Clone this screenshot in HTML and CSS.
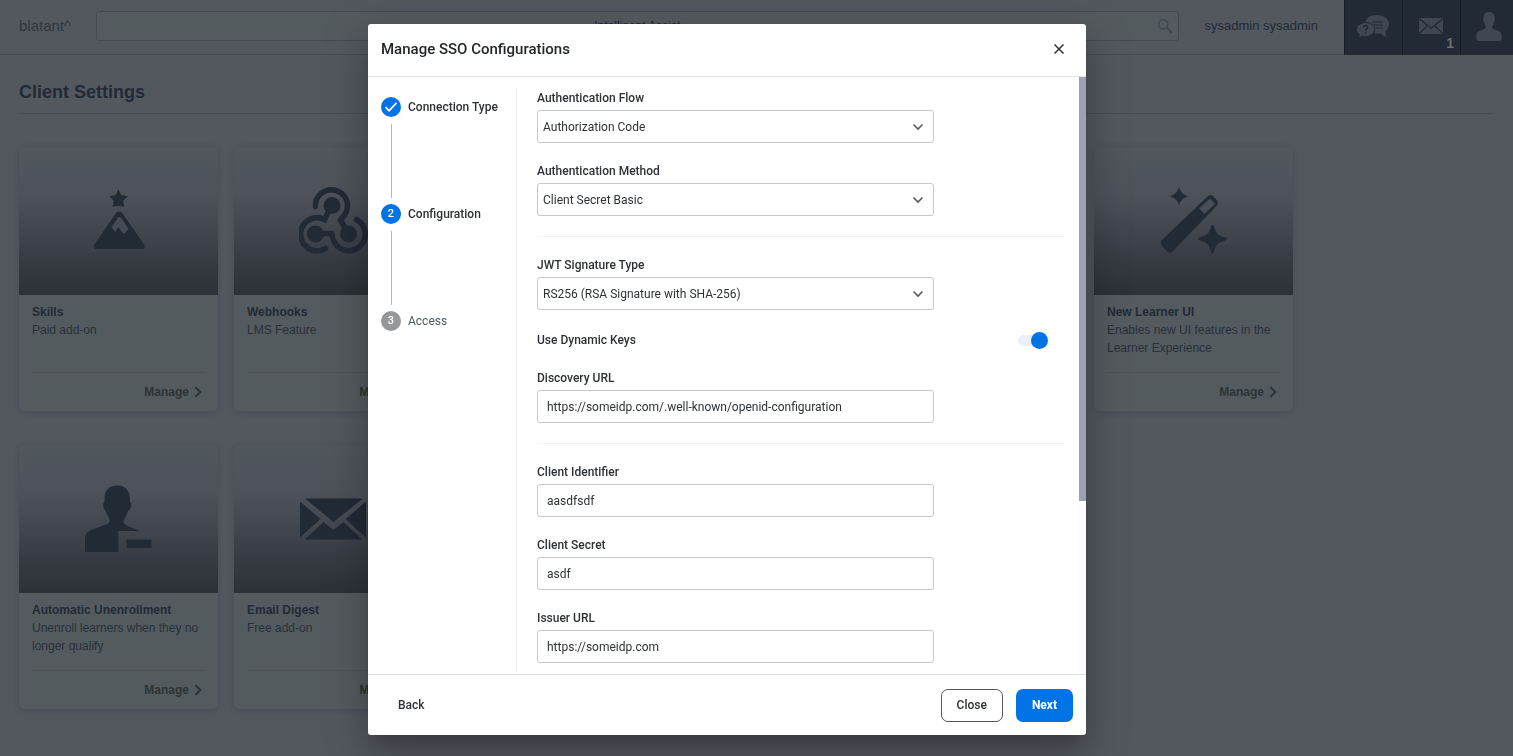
FILE: index.html
```html
<!DOCTYPE html>
<html lang="en">
<head>
<meta charset="utf-8">
<title>Client Settings</title>
<link rel="stylesheet" href="styles.css">
</head>
<body>
<header class="topbar">
  <a class="brand" href="#">blatant^</a>
  <div class="search">
    <input class="search-input" type="text" placeholder="Intelligent Assist" aria-label="Search">
    <svg class="search-icon" viewBox="0 0 16 16" width="16" height="16" fill="none" stroke="currentColor" stroke-width="1.4"><circle cx="6.2" cy="6.2" r="4.6"/><path d="M9.6 9.6 15 15" stroke-width="1.8"/></svg>
  </div>
  <span class="user">sysadmin sysadmin</span>
  <nav class="tiles">
    <button class="tile" type="button" aria-label="Help">
      <svg viewBox="0 0 34 24" width="34" height="24"><path fill="currentColor" d="M20.500 1C28 1 33 4.800 33 10.200c0 3-1.500 5.400-3.700 7 .2 2 .7 3.800 1.300 5.800-2.600-.8-4.600-2-6-3.700-2 .3-4.500.3-6.500 0C20 13 16 8 9 8.500 10 4 14.500 1 20.500 1Z"/><path d="M16 8h11M17.500 11h9.500M19.500 14h7.500" stroke="#222a36" stroke-width="1.200"/><path fill="currentColor" stroke="#222a36" stroke-width="1" d="M9.500 8.500c5.200 0 9.200 3 9.200 7s-4 7-9.200 7c-1 0-2-.1-3-.4-1.200 1-2.700 1.600-4.500 1.700.8-1.200 1.200-2.300 1.200-3.400C1.400 19.100.500 17.400.500 15.500c0-4 4-7 9-7Z"/><path fill="none" stroke="#222a36" stroke-width="1.500" d="M7.400 13.500c.2-2.800 4.400-2.500 4.200.1-.1 1.500-2 1.500-2 3.300M9.600 18.200v1.600"/></svg>
    </button>
    <button class="tile" type="button" aria-label="Messages, 1 unread">
      <svg viewBox="0 0 24 16" width="24" height="16"><rect width="24" height="16" rx="1" fill="currentColor"/><path d="M.5.700 12 10.500 23.500.700M.5 15.500l8-8M23.500 15.500l-8-8" fill="none" stroke="#222a36" stroke-width="1.300"/></svg>
      <span class="badge">1</span>
    </button>
    <button class="tile" type="button" aria-label="Profile">
      <svg viewBox="0 0 26 29" width="26" height="29"><path fill="currentColor" d="M13 0c3.700 0 5.600 2.300 5.400 6.200.9 1 .6 3-.4 3.800-.4 2.200-1.400 3.500-2 4.400.2 1.800 1 2.600 3.400 3.300 4.400 1.200 6.100 2.200 6.100 5.300V27c0 1-.8 2-2 2h-21c-1.200 0-2-1-2-2v-4c0-3.100 1.700-4.100 6.100-5.300 2.400-.7 3.200-1.500 3.400-3.300-.6-.9-1.600-2.200-2-4.400-1-.8-1.300-2.800-.4-3.800C7.400 2.300 9.300 0 13 0Z"/></svg>
    </button>
  </nav>
</header>

<main class="page">
  <h1 class="page-title">Client Settings</h1>
  <div class="cards">
    <article class="card">
      <div class="card-art"><svg viewBox="0 0 70 70" width="70" height="70"><path fill="currentColor" d="M34.500 3.500l2.900 5.800 6.300 1-4.500 4.500 1.200 6.200q-3-1-5.900-1t-5.900 1l1.200-6.200-4.500-4.500 6.300-1ZM35 25.500c1.700 0 2.700.8 3.700 2.200L60 58.500c1.400 2.300.6 4.500-2 4.500H12.500c-2.600 0-3.400-2.200-2-4.500l21-30.800c1-1.400 2-2.200 3.500-2.200Z"/><path fill="#464c56" d="M35 31c1.200 0 2 .6 2.800 1.800l6.700 10L40.500 48l-2.700-2-3.300-5-3 4.700-4-4.300 5.300-8.200C33.400 31.600 34 31 35 31Z"/></svg></div>
      <div class="card-body"><h2 class="card-title">Skills</h2><p class="card-text">Paid add-on</p>
        <div class="card-foot"><a class="manage" href="#">Manage <svg viewBox="0 0 8 12" width="8" height="12"><path d="M1.500 1.200 6.300 6l-4.800 4.800"/></svg></a></div></div>
    </article>
    <article class="card">
      <div class="card-art"><svg viewBox="0 0 70 70" width="70" height="70"><g fill="none" stroke="currentColor" stroke-width="5.500" stroke-linecap="round"><path d="M16.500 20.500A16 16 0 1 1 46.500 27.500L41.500 34l6.500 11"/><path d="M26.500 62.500A16.500 16.500 0 1 1 25.500 33.500L33 19"/><path d="M57.500 33.500A16.500 16.500 0 1 1 34 53L32.500 47.500H17"/></g><g fill="currentColor"><circle cx="33" cy="19.500" r="8.500"/><circle cx="16.500" cy="48" r="8.500"/><circle cx="49.500" cy="48" r="8.500"/></g></svg></div>
      <div class="card-body"><h2 class="card-title">Webhooks</h2><p class="card-text">LMS Feature</p>
        <div class="card-foot"><a class="manage" href="#">Manage <svg viewBox="0 0 8 12" width="8" height="12"><path d="M1.500 1.200 6.300 6l-4.800 4.800"/></svg></a></div></div>
    </article>
    <article class="card card-last">
      <div class="card-art"><svg viewBox="0 0 70 70" width="70" height="70"><g fill="currentColor"><path d="M20 1c1.500 5 3.700 7.500 9 9.200-5.300 1.700-7.500 4-9 9-1.500-5-3.700-7.300-9-9C16.300 8.500 18.500 6 20 1ZM53.500 39c1 0 1.400.8 1.900 2.500 1.700 6 3.700 8 9.600 9.600 4.300 1.300 4.300 2.500 0 3.800-6 1.600-8 3.600-9.600 9.600-1.200 4-2.600 4-3.800 0-1.600-6-3.600-8-9.600-9.600-4.300-1.300-4.300-2.500 0-3.800 6-1.600 8-3.600 9.600-9.600.5-1.700.9-2.500 1.900-2.500Z"/><path d="M49 10q2.500-2 5 0l4 4.500q1.800 2.500 0 5L14 65q-3 3-6 0l-5-5q-2.500-3 0-6Z"/></g><path fill="#484e58" d="m51 12.500 5 5.500L45.500 28 40 22.500Z"/></svg></div>
      <div class="card-body"><h2 class="card-title">New Learner UI</h2><p class="card-text">Enables new UI features in the Learner Experience</p>
        <div class="card-foot"><a class="manage" href="#">Manage <svg viewBox="0 0 8 12" width="8" height="12"><path d="M1.500 1.200 6.300 6l-4.800 4.800"/></svg></a></div></div>
    </article>
    <article class="card">
      <div class="card-art"><svg viewBox="0 0 70 70" width="70" height="70"><path fill="currentColor" d="M33 1.500c8 0 13 5 12.800 13v3c2 1.500 2 5.500-.3 8-1.500 1.500-1.800 1.700-2 3-1 4-4 6.500-4 9 0 2.200 1.500 3.300 4.500 4.700l12 4.800H34.300v21H1V54c0-4 2.200-6.300 6.500-8L22 40.500c2.700-1.200 3.700-2 3.700-4 0-3-2.500-4.500-3.700-8.500-.3-1-.7-1.500-1.500-2.500-1.800-2.500-1.800-6 0-8v-3c0-8 4.500-13 12.500-13ZM42.500 55.500h25V64h-25Z"/></svg></div>
      <div class="card-body"><h2 class="card-title">Automatic Unenrollment</h2><p class="card-text">Unenroll learners when they no longer qualify</p>
        <div class="card-foot"><a class="manage" href="#">Manage <svg viewBox="0 0 8 12" width="8" height="12"><path d="M1.500 1.200 6.300 6l-4.800 4.800"/></svg></a></div></div>
    </article>
    <article class="card">
      <div class="card-art"><svg viewBox="0 0 70 70" width="70" height="70"><path fill="currentColor" d="M6 14.500h58L34.500 38ZM1 17.500 21.500 35 1 53.500ZM67 17.500V53.500L46.500 35ZM24.500 38l10 8 10-8L63 55.500H6Z"/></svg></div>
      <div class="card-body"><h2 class="card-title">Email Digest</h2><p class="card-text">Free add-on</p>
        <div class="card-foot"><a class="manage" href="#">Manage <svg viewBox="0 0 8 12" width="8" height="12"><path d="M1.500 1.200 6.300 6l-4.800 4.800"/></svg></a></div></div>
    </article>
  </div>
</main>

<div class="overlay">
  <section class="modal" role="dialog" aria-modal="true" aria-labelledby="modal-title">
    <header class="modal-head">
      <h2 class="modal-title" id="modal-title">Manage SSO Configurations</h2>
      <button class="icon-button" type="button" aria-label="Close dialog"><svg viewBox="0 0 12 12" width="12" height="12"><path d="m1.500 1.500 9 9m0-9-9 9" fill="none" stroke="currentColor" stroke-width="1.500"/></svg></button>
    </header>
    <div class="modal-body">
      <ol class="steps">
        <li class="step"><span class="dot"><svg viewBox="0 0 14 12" width="14" height="12"><path d="m1.500 6.200 3.600 3.600 7.400-8" fill="none" stroke="#fff" stroke-width="1.800"/></svg></span><span>Connection Type</span></li>
        <li class="step"><span class="dot">2</span><span>Configuration</span></li>
        <li class="step step-next"><span class="dot">3</span><span>Access</span></li>
      </ol>
      <form class="form">
        <div class="field">
          <label for="flow">Authentication Flow</label>
          <div class="select"><select id="flow"><option>Authorization Code</option></select><svg class="caret" viewBox="0 0 12 8" width="12" height="8"><path d="m1.500 1.500 4.500 4.500 4.500-4.500"/></svg></div>
        </div>
        <div class="field">
          <label for="method">Authentication Method</label>
          <div class="select"><select id="method"><option>Client Secret Basic</option></select><svg class="caret" viewBox="0 0 12 8" width="12" height="8"><path d="m1.500 1.500 4.500 4.500 4.500-4.500"/></svg></div>
        </div>
        <hr class="rule">
        <div class="field">
          <label for="jwt">JWT Signature Type</label>
          <div class="select"><select id="jwt"><option>RS256 (RSA Signature with SHA-256)</option></select><svg class="caret" viewBox="0 0 12 8" width="12" height="8"><path d="m1.500 1.500 4.500 4.500 4.500-4.500"/></svg></div>
        </div>
        <div class="toggle-row">
          <label for="keys">Use Dynamic Keys</label>
          <input class="toggle" id="keys" type="checkbox" role="switch" checked>
        </div>
        <div class="field">
          <label for="discovery">Discovery URL</label>
          <input class="text" id="discovery" type="text" value="https://someidp.com/.well-known/openid-configuration">
        </div>
        <hr class="rule">
        <div class="field">
          <label for="client-id">Client Identifier</label>
          <input class="text" id="client-id" type="text" value="aasdfsdf">
        </div>
        <div class="field">
          <label for="secret">Client Secret</label>
          <input class="text" id="secret" type="text" value="asdf">
        </div>
        <div class="field">
          <label for="issuer">Issuer URL</label>
          <input class="text" id="issuer" type="text" value="https://someidp.com">
        </div>
      </form>
      <div class="track"><div class="thumb"></div></div>
    </div>
    <footer class="modal-foot">
      <button class="button button-plain" type="button">Back</button>
      <button class="button button-outline" type="button">Close</button>
      <button class="button button-primary" type="button">Next</button>
    </footer>
  </section>
</div>
</body>
</html>
```
FILE: styles.css
```css
* { box-sizing: border-box; }
body {
  margin: 0;
  height: 100vh;
  overflow: hidden;
  background: #53585f;
  color: #222a36;
  font-family: "Liberation Sans", Arial, sans-serif;
}
button, input, select { font: inherit; color: inherit; margin: 0; }
a { color: inherit; text-decoration: none; }
svg { display: block; flex: none; }

.topbar {
  display: flex;
  align-items: center;
  height: 55px;
  padding: 0 0 3px 19px;
  border-bottom: 1px solid #484d55;
}
.brand { width: 77px; font-size: 15px; color: #2f3640; }
.search { position: relative; flex: 1; height: 30px; }
.search-input {
  width: 100%;
  height: 100%;
  padding: 0 24px;
  border: 1px solid #444a50;
  border-radius: 3px;
  background: #545b5e;
  font-size: 12px;
  text-align: center;
}
.search-input::placeholder { color: #222a36; }
.search-icon { position: absolute; right: 6px; top: 7px; color: #3f464d; }
.user { padding: 0 26px; font-size: 13px; }
.tiles { display: flex; align-self: stretch; margin-bottom: -4px; background: #222a36; }
.tile {
  position: relative;
  display: flex;
  align-items: center;
  justify-content: center;
  width: 58px;
  padding: 0 2px 3px 0;
  border: 0;
  border-left: 1px solid #161c26;
  background: #222a36;
  color: #404652;
}
.tile:last-child { width: 53px; padding: 0 0 3px 3px; }
.badge { position: absolute; right: 6px; bottom: 4px; font-size: 14px; font-weight: bold; color: #6a7070; }

.page { padding: 0 21px 0 19px; }
.page-title {
  margin: 0 0 33px;
  padding: 26px 0 9px;
  border-bottom: 1px solid #484d54;
  font-size: 18px;
  line-height: 23px;
}
.cards { display: grid; grid-template-columns: repeat(auto-fill, 199px); gap: 34px 16px; }
.card {
  display: flex;
  flex-direction: column;
  min-height: 264px;
  overflow: hidden;
  border-radius: 5px;
  background: #545b5e;
  box-shadow: 0 1px 6px rgba(20, 26, 34, 0.2);
}
.card-last { grid-column: 6; }
.card-art {
  display: flex;
  align-items: center;
  justify-content: center;
  height: 148px;
  background: linear-gradient(#50575d, #4d525a 33%, #3b4049 67%, #2c3136);
}
.card-body { display: flex; flex-direction: column; flex: 1; padding: 8px 13px 0; }
.card-title, .card-text { margin: 0; font-size: 12px; line-height: 18px; }
.card-text { color: #29303b; }
.card-foot {
  display: flex;
  justify-content: flex-end;
  margin-top: auto;
  padding: 10px 3px 10px 0;
  border-top: 1px solid #4d5356;
}
.manage { display: flex; align-items: center; gap: 5px; font-size: 12px; font-weight: bold; line-height: 18px; color: #2d3437; }
.manage svg { fill: none; stroke: currentColor; stroke-width: 2; }

.overlay {
  position: fixed;
  inset: 0;
  display: flex;
  justify-content: center;
  padding: 24px 59px 21px 0;
}
.modal {
  display: flex;
  flex-direction: column;
  width: 100%;
  max-width: 718px;
  border-radius: 3px;
  background: #fff;
  color: #2e3236;
  font-family: Roboto, sans-serif;
  font-size: 12px;
  box-shadow: 0 11px 15px -7px rgba(0, 0, 0, 0.2), 0 24px 38px 3px rgba(0, 0, 0, 0.14), 0 9px 46px 8px rgba(0, 0, 0, 0.12);
}
.modal-head {
  display: flex;
  align-items: center;
  justify-content: space-between;
  height: 53px;
  padding: 0 21px 2px 13px;
  border-bottom: 1px solid #e2e4e6;
}
.modal-title { margin: 0; font-size: 15px; font-weight: 500; color: #24272a; }
.icon-button { padding: 0; border: 0; background: none; }
.modal-body { display: flex; flex: 1; min-height: 0; }

.steps { width: 135px; margin: 0; padding: 20px 0 0 13px; list-style: none; font-weight: 500; }
.step { display: grid; grid-template-columns: 20px 1fr; column-gap: 7px; line-height: 20px; }
.step:not(:last-child)::after {
  content: "";
  width: 1px;
  height: 74px;
  margin: 7px auto 6px;
  background: #b4b6b8;
}
.dot {
  display: flex;
  align-items: center;
  justify-content: center;
  height: 20px;
  border-radius: 50%;
  background: #0073e6;
  color: #fff;
  font-size: 11px;
}
.step-next { font-weight: 400; color: #50585f; }
.step-next .dot { background: #969799; font-weight: 500; }

.form {
  display: flex;
  flex: 1;
  flex-direction: column;
  gap: 20px;
  margin: 13px 15px 2px 13px;
  padding-left: 20px;
  border-left: 1px solid #eff0f1;
  overflow-y: auto;
  scrollbar-width: none;
}
.field { display: flex; flex: none; flex-direction: column; gap: 4px; max-width: 397px; }
.form label { font-weight: 500; line-height: 16px; }
.select { position: relative; }
.select select, .text {
  width: 100%;
  height: 33px;
  border: 1px solid #c6c8ca;
  border-radius: 3px;
  background: #fff;
}
.select select { appearance: none; padding: 0 30px 0 5px; }
.text { padding: 0 9px; }
.caret {
  position: absolute;
  right: 10px;
  top: 13px;
  fill: none;
  stroke: #55585c;
  stroke-width: 1.6;
  pointer-events: none;
}
.rule { flex: none; width: 100%; height: 1px; margin: 0; border: 0; background: #f1f2f4; }
.toggle-row { display: flex; flex: none; align-items: center; justify-content: space-between; height: 20px; padding-right: 16px; }
.toggle {
  appearance: none;
  display: flex;
  align-items: center;
  justify-content: flex-end;
  width: 30px;
  height: 11px;
  border-radius: 6px;
  background: #eaf0fa;
}
.toggle::before { content: ""; width: 17px; height: 17px; flex: none; border-radius: 50%; background: #0073e6; }
.track { width: 7px; background: #fcfcfd; }
.thumb { height: 71%; background: #a09fb2; }

.modal-foot {
  display: flex;
  align-items: center;
  gap: 13px;
  height: 61px;
  padding: 0 13px;
  border-top: 1px solid #dfe3e7;
}
.button { height: 33px; padding: 0 15px; border: 1px solid transparent; border-radius: 7px; background: none; font-weight: 500; }
.button-plain { margin-right: auto; padding: 0 16px; }
.button-outline { border-color: #54585c; }
.button-primary { background: #0073e6; color: #fff; font-weight: 700; }
```
